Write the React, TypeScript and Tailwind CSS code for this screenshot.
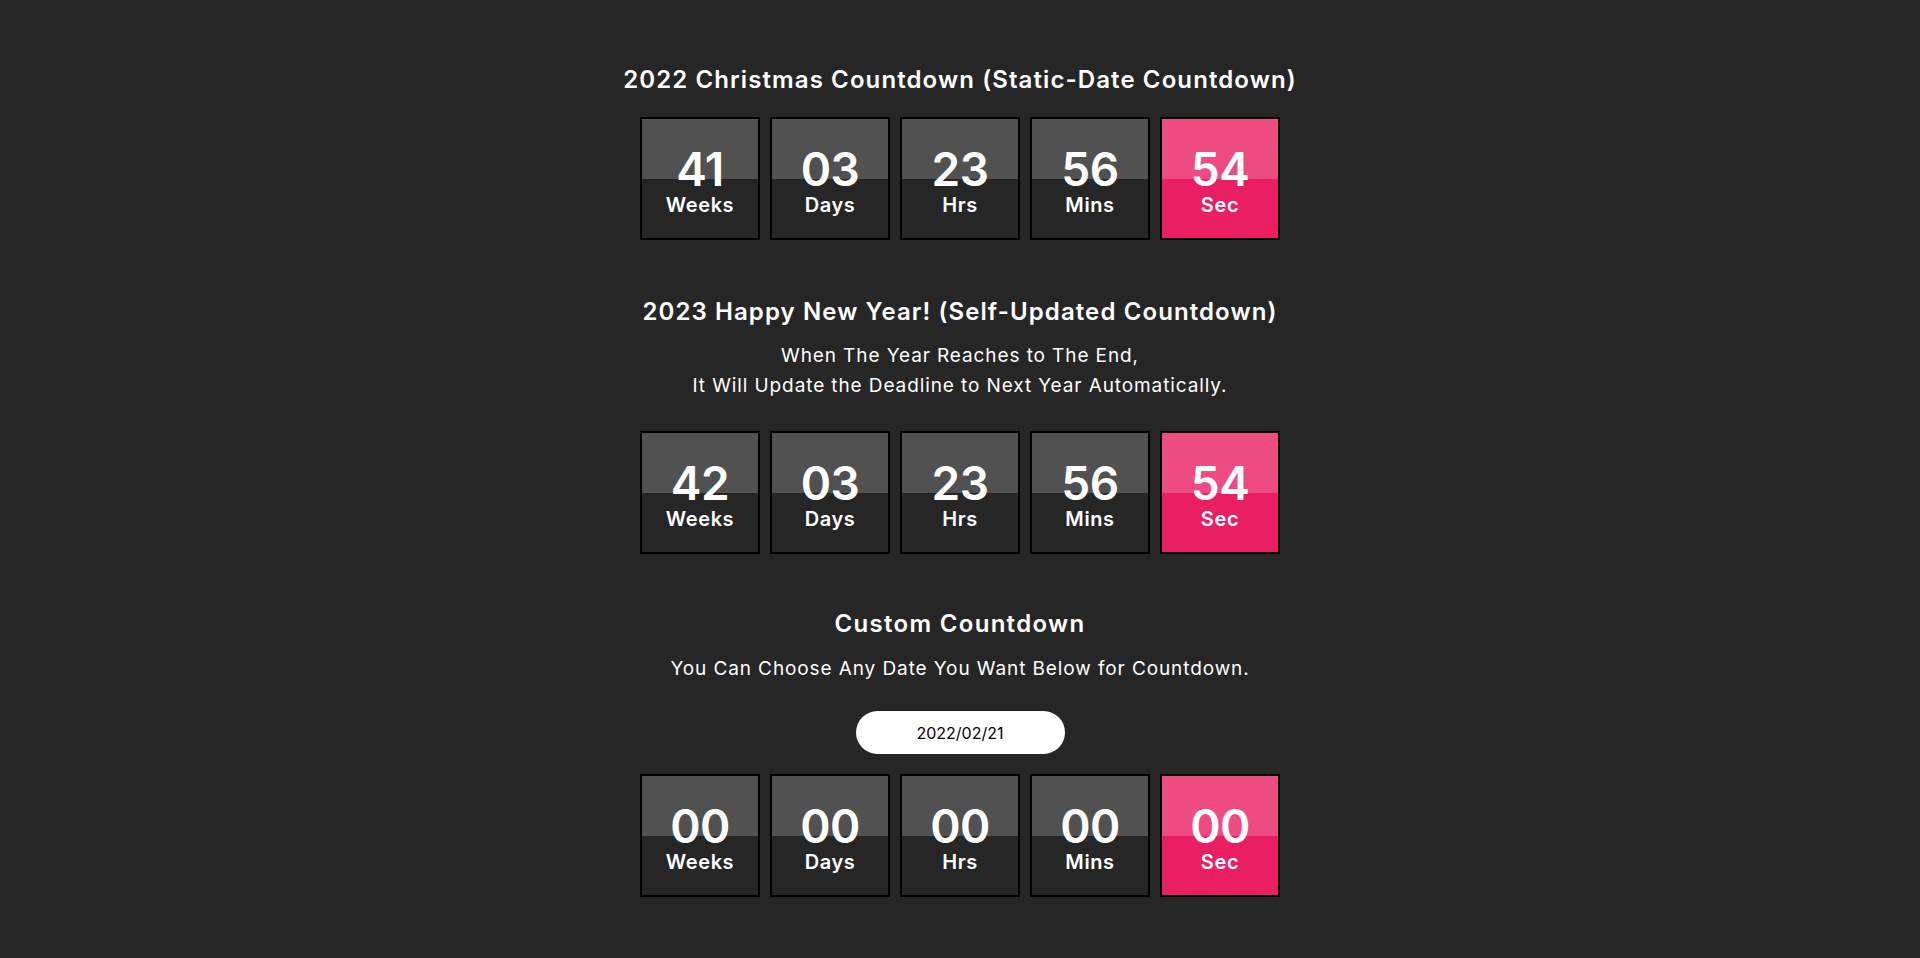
import React from 'react';

type Unit = { value: string; label: string };

const makeUnits = (values: string[]): Unit[] => {
  const labels = ['Weeks', 'Days', 'Hrs', 'Mins', 'Sec'];
  return labels.map((label, i) => ({ value: values[i], label }));
};

const TimeBox: React.FC<{ unit: Unit; accent?: boolean }> = ({ unit, accent }) => (
  <div
    className={`relative w-[120px] h-[123px] border-2 border-black flex flex-col items-center justify-center pt-[4px] ${
      accent ? 'bg-[#e91e63]' : 'bg-[#262626]'
    }`}
  >
    {/* lighter upper half */}
    <div className="absolute inset-x-0 top-0 h-1/2 bg-white/20" />
    <span className="relative text-[46px] leading-none font-semibold tracking-[-0.5px]">{unit.value}</span>
    <span className="relative text-[20px] leading-none font-semibold tracking-[0.6px] mt-[3px]">{unit.label}</span>
  </div>
);

const Row: React.FC<{ values: string[]; className?: string }> = ({ values, className }) => (
  <div className={`flex justify-center gap-[10px] ${className ?? ''}`}>
    {makeUnits(values).map((u, i) => (
      <TimeBox key={u.label} unit={u} accent={i === 4} />
    ))}
  </div>
);

const App: React.FC = () => {
  return (
    <div
      className="min-h-screen bg-[#262626] text-white text-center pt-[62px]"
      style={{ fontFamily: 'Inter, "Noto Sans", sans-serif' }}
    >
      <h2 className="text-[24px] leading-[36px] font-semibold tracking-[1.1px]">
        2022 Christmas Countdown (Static-Date Countdown)
      </h2>
      <Row values={['41', '03', '23', '56', '54']} className="mt-[19px]" />

      <h2 className="text-[24px] leading-[36px] font-semibold tracking-[1.1px] mt-[54px]">
        2023 Happy New Year! (Self-Updated Countdown)
      </h2>
      <p className="text-[19px] leading-[30px] tracking-[0.9px] mt-[11px]">
        When The Year Reaches to The End,
        <br />
        It Will Update the Deadline to Next Year Automatically.
      </p>
      <Row values={['42', '03', '23', '56', '54']} className="mt-[30px]" />

      <h2 className="text-[24px] leading-[36px] font-semibold tracking-[1.3px] mt-[52px]">Custom Countdown</h2>
      <p className="text-[19px] leading-[30px] tracking-[0.9px] mt-[12px]">
        You Can Choose Any Date You Want Below for Countdown.
      </p>
      <div className="flex justify-center mt-[27px]">
        <input
          type="text"
          defaultValue="2022/02/21"
          className="w-[209px] h-[43px] rounded-full bg-white text-black text-[16px] text-center outline-none"
        />
      </div>
      <Row values={['00', '00', '00', '00', '00']} className="mt-[20px]" />
    </div>
  );
};

export default App;
